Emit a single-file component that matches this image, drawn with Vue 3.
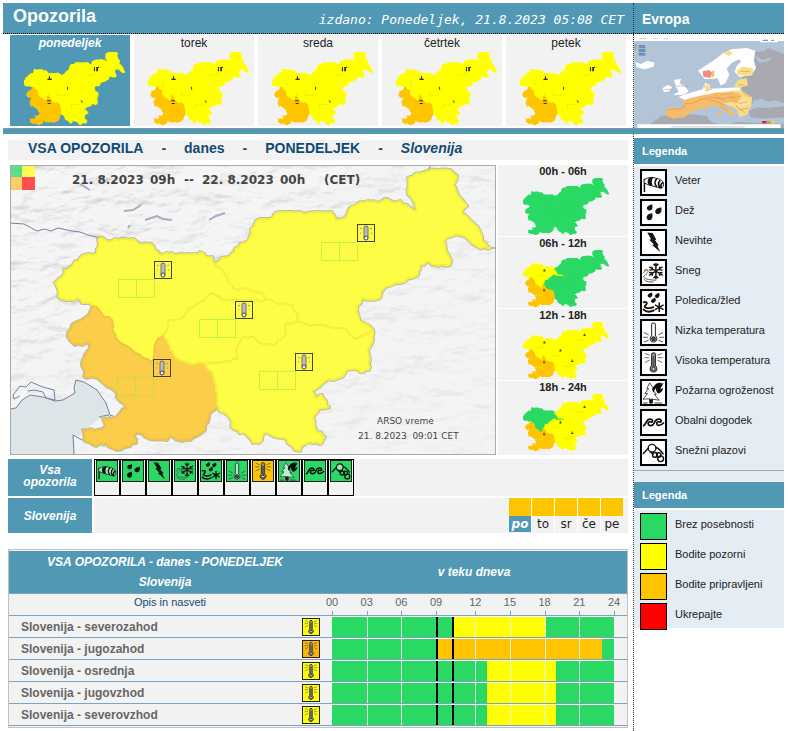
<script setup>
import { ref } from 'vue'

const GREEN = '#29d964'
const YELLOW = '#ffff00'
const ORANGE = '#ffc400'
const RED = '#ff0000'

const outlines = {
  nw: [[100,238],[112,241],[125,239],[132,239],[139,244],[151,244],[158,252],[162,255],[175,255],[188,254],[200,252],[206,257],[212,257],[216,266],[222,270],[228,281],[238,290],[255,291],[265,297],[263,302],[250,300],[222,300],[214,294],[205,300],[190,308],[182,318],[168,322],[166,333],[163,334],[156,342],[153,361],[140,355],[122,344],[112,330],[112,320],[104,317],[93,306],[90,303],[82,303],[78,298],[60,298],[58,289],[55,283],[62,277],[64,270],[73,265],[82,256],[97,253],[98,240]],
  sw: [[93,306],[88,316],[72,325],[68,337],[75,345],[88,342],[90,349],[82,363],[84,376],[100,380],[115,391],[120,401],[127,409],[117,417],[109,419],[103,418],[106,425],[98,430],[83,430],[84,440],[96,446],[106,443],[113,448],[122,449],[130,446],[136,443],[134,435],[140,433],[150,439],[167,440],[170,435],[182,441],[190,440],[205,430],[208,416],[214,410],[217,404],[216,390],[213,375],[206,364],[195,364],[180,360],[170,350],[167,340],[163,334],[156,342],[153,361],[140,355],[122,344],[112,330],[112,320],[104,317]],
  c: [[265,297],[263,302],[250,300],[222,300],[214,294],[205,300],[190,308],[182,318],[168,322],[166,333],[163,334],[167,340],[170,350],[180,360],[195,364],[206,364],[215,362],[225,361],[238,360],[236,350],[242,338],[255,338],[262,344],[275,346],[278,340],[286,335],[285,325],[287,323],[296,322],[298,315],[292,305],[275,302]],
  ne: [[216,266],[222,258],[229,257],[235,249],[248,241],[251,229],[256,221],[270,219],[276,213],[290,212],[305,214],[330,212],[338,220],[347,216],[350,208],[365,202],[378,203],[385,199],[400,201],[415,211],[413,200],[408,194],[408,178],[425,172],[450,170],[457,176],[454,186],[461,199],[467,206],[462,213],[480,232],[483,242],[490,248],[478,247],[460,235],[444,241],[450,258],[450,265],[435,265],[430,262],[420,265],[418,275],[400,283],[383,290],[380,298],[362,298],[357,309],[359,319],[373,330],[355,339],[345,328],[315,325],[298,322],[296,322],[298,315],[292,305],[275,302],[265,297],[255,291],[238,290],[228,281],[222,270]],
  se: [[373,330],[371,345],[369,355],[369,370],[360,372],[353,369],[345,373],[338,378],[327,380],[312,391],[315,397],[322,395],[329,407],[319,409],[313,418],[316,430],[325,437],[320,444],[305,444],[300,451],[295,450],[283,438],[265,432],[262,440],[253,443],[247,435],[240,433],[232,427],[230,418],[222,412],[217,404],[216,390],[213,375],[206,364],[215,362],[225,361],[238,360],[236,350],[242,338],[255,338],[262,344],[275,346],[278,340],[286,335],[285,325],[287,323],[296,322],[298,322],[315,325],[345,328],[355,339]]
}

// Every edge gets repeatable bends that depend only on its end points,
// so that neighbouring regions keep a common border.
function bend(a, b, depth) {
  const [x, y] = a
  const [nx, ny] = b
  if (depth === 0 || Math.hypot(nx - x, ny - y) < 5) return [a]
  const seed = Math.round((x + nx) * 7 + (y + ny) * 13)
  const mid = [(x + nx) / 2 + ((seed % 5) - 2) * 0.6, (y + ny) / 2 + ((seed % 7) - 3) * 0.5]
  return [...bend(a, mid, depth - 1), ...bend(mid, b, depth - 1)]
}
const roughen = points =>
  'M' + points.flatMap((p, i) => bend(p, points[(i + 1) % points.length], 2)).map(p => p.join(' ')).join('L') + 'Z'

const shapes = Object.entries(outlines).map(([id, pts]) => ({ id, d: roughen(pts) }))

const all = (base, extra = {}) => ({ nw: base, sw: base, c: base, ne: base, se: base, ...extra })
const standard = all(YELLOW, { sw: ORANGE })

const boxes = [
  { id: 'nw', x: 154, y: 261 },
  { id: 'ne', x: 357, y: 224 },
  { id: 'c', x: 235, y: 301 },
  { id: 'sw', x: 153, y: 359 },
  { id: 'se', x: 295, y: 353 }
]

const titleParts = [
  { x: 72, text: '21. 8.2023' },
  { x: 150, text: '09h' },
  { x: 184, text: '--' },
  { x: 202, text: '22. 8.2023' },
  { x: 280, text: '00h' },
  { x: 324, text: '(CET)' }
]

const days = [
  { name: 'ponedeljek', short: 'po' },
  { name: 'torek', short: 'to' },
  { name: 'sreda', short: 'sr' },
  { name: 'četrtek', short: 'če' },
  { name: 'petek', short: 'pe' }
]
const activeDay = ref(0)

const periods = [
  { label: '00h - 06h', fills: all(GREEN) },
  { label: '06h - 12h', fills: all(GREEN, { nw: YELLOW, sw: ORANGE }) },
  { label: '12h - 18h', fills: standard },
  { label: '18h - 24h', fills: all(YELLOW, { nw: GREEN, sw: ORANGE }) }
]

const kinds = [
  { id: 'wind', label: 'Veter' },
  { id: 'rain', label: 'Dež' },
  { id: 'storm', label: 'Nevihte' },
  { id: 'snow', label: 'Sneg' },
  { id: 'ice', label: 'Poledica/žled' },
  { id: 'cold', label: 'Nizka temperatura' },
  { id: 'heat', label: 'Visoka temperatura' },
  { id: 'fire', label: 'Požarna ogroženost' },
  { id: 'coast', label: 'Obalni dogodek' },
  { id: 'avalanche', label: 'Snežni plazovi' }
]

const levels = [
  { label: 'Brez posebnosti', color: GREEN },
  { label: 'Bodite pozorni', color: YELLOW },
  { label: 'Bodite pripravljeni', color: ORANGE },
  { label: 'Ukrepajte', color: RED }
]

const rows = [
  { name: 'Slovenija - severozahod', color: YELLOW, from: 10, to: 18 },
  { name: 'Slovenija - jugozahod', color: ORANGE, from: 9, to: 23 },
  { name: 'Slovenija - osrednja', color: YELLOW, from: 13, to: 19 },
  { name: 'Slovenija - jugovzhod', color: YELLOW, from: 13, to: 19 },
  { name: 'Slovenija - severovzhod', color: YELLOW, from: 13, to: 19 }
]
const hours = Array.from({ length: 24 }, (_, h) => h)
const marks = [0, 3, 6, 9, 12, 15, 18, 21, 24]
const two = n => String(n).padStart(2, '0')
const cellColor = (row, h) => (h >= row.from && h < row.to ? row.color : GREEN)
</script>

<template>
  <div class="page">
    <svg class="sprite" aria-hidden="true">
      <symbol id="i-wind" viewBox="0 0 24 24">
        <path d="M2.500 8v14" fill="none" stroke="#111" stroke-width="1.600" />
        <path d="M2.500 9c4-2.500 8-3 12-1.500 4 .5 7 2.500 8 5 .5 3-1 5.500-3 5.500-5-2-11-2-17-5.500" fill="#fff" fill-opacity=".6" stroke="#222" />
        <path d="M7 7.500c2-1 4-1.200 5-.7-2 2-2.500 6-.5 8.700L7 14.500c-1.500-2-1.500-5 0-7Z" fill="#111" />
        <path d="M15.500 8c-2.500 2.500-2.500 6 0 8.500M19 9.500c-2.500 2.500-2 6 0 8M22 12c-2.500 1-3 4-1.500 6" fill="none" stroke="#111" stroke-width="1.800" />
      </symbol>
      <symbol id="i-rain" viewBox="0 0 24 24">
        <path d="M10.500 3.500c1 3 .5 6.500-2.500 6.500S4.500 7 6 5.500s3-1 4.500-2ZM20 6.500c1 3 0 7-3 7s-4-2.500-2.500-4.500 4-1.500 5.500-2.500ZM10.500 12.500c1 3 .5 7.500-2.500 7.500s-4-3-2.500-5 3.500-1.500 5-2.500Z" fill="#161616" />
      </symbol>
      <symbol id="i-storm" viewBox="0 0 24 24">
        <path d="M5.500 1.500 11 2l4 7-1.500.5 4 5.500-1.500.5L19 22l-8.500-7.500 2-.5-5-5 2-.5Z" fill="#161616" />
      </symbol>
      <symbol id="i-snow" viewBox="0 0 24 24">
        <path d="M14.500 2v17M7.500 6l14 9M21.500 6l-14 9M12 3l2.500 2.500L17 3M12 18l2.500-2.500L17 18M7.500 9.500 11 9l-.5-3M18.500 6l-.5 3 3.500.5M7.500 12l3.500.500-.5 3M18.500 15.500l-.5-3 3.500-.5" fill="none" stroke="#151515" stroke-width="1.500" />
        <path d="M2 10c3-2 5-1 4 2-2 3-5 3-4 5s7 3 13 3M2 19c2 3 6 3 10 3M1 13l4-4" fill="none" stroke="#555" />
      </symbol>
      <symbol id="i-ice" viewBox="0 0 24 24">
        <path d="M10 2c1 2 0 4.500-2 4.500S6 4 7 3.500ZM17.500 2.500c1 2 0 4.500-2 4.500s-2-2.500-1-3ZM13.500 7.500c1 2 0 4.500-2 4.500s-2-2.500-1-3Z" fill="#111" stroke="#111" />
        <path d="M18 12v10M13.500 14.500l9 5M22.500 14.500l-9 5" stroke="#111" stroke-width="1.600" />
        <path d="M1 12c3-1.500 5 0 3.500 2s-3 2.500 0 3.500 6 0 8-1M1 19c3 3 8 3 12 1" fill="none" stroke="#111" stroke-width="1.900" />
      </symbol>
      <symbol id="i-cold" viewBox="0 0 24 24">
        <path d="M10 15.500V4a2 2 0 0 1 4 0v11.500a3.500 3.500 0 1 1-4 0Z" fill="#fff" fill-opacity=".6" stroke="#333" stroke-width="1.100" />
        <circle cx="12" cy="18.500" r="2" fill="#555" stroke="#111" />
        <path d="m2 12 5 2.500M1 17h5M2 22l5-2M22 12l-5 2.500M23 17h-5M22 22l-5-2" stroke="#444" stroke-width=".9" />
      </symbol>
      <symbol id="i-heat" viewBox="0 0 24 24">
        <path d="M10 15.500V4a2 2 0 0 1 4 0v11.500a3.500 3.500 0 1 1-4 0Z" fill="#999" stroke="#333" stroke-width="1.200" />
        <path d="M12 5.500V18" stroke="#555" stroke-width="2.200" />
        <circle cx="12" cy="18.700" r="1.700" fill="#ddd" stroke="#222" />
        <path d="m3 2.500 5 2M2.500 7h5M3 12l5-2.500M21 2.500l-5 2M21.500 7h-5M21 12l-5-2.500" stroke="#555" stroke-width=".9" />
      </symbol>
      <symbol id="i-fire" viewBox="0 0 24 24">
        <path d="M8 2 5 8h2l-4 5h3l-5 6 7-.5V23h3v-4l7 1-5-6h2l-4-5h2Z" fill="#fff" fill-opacity=".65" stroke="#444" />
        <path d="M22.500 2c-3 1-5 2-4.500 5 .5-3 1-4 3-5-4-1-7.500 1-8.500 3.500C9.500 8 11 11 13 12.500c-1-3 .5-4 1.500-5 0 3 1 4.500 2.500 5.500 3-.5 5-3 5-6-1 1-2 1.500-3 1.500 1-2 2-4 3.500-6.500Z" fill="#090909" />
        <path d="M8 19h3v4H8zM1 23h5M13 23h8" fill="#111" stroke="#333" />
      </symbol>
      <symbol id="i-coast" viewBox="0 0 24 24">
        <path d="M1 15.500c3.500 0 2.500-7 7.500-7 3 0 3 3 1.500 3-3-1-4.500 1-3 3 2 1.500 4.500.5 5.500-1.500 1-2.500 2.500-4.500 5-4.500 3 0 3 3 1.500 3-3-1-4.500 1-3 3 2 1.500 4.500 0 7-2.500" fill="none" stroke="#0b0b0b" stroke-width="1.800" />
      </symbol>
      <symbol id="i-avalanche" viewBox="0 0 24 24">
        <path d="M1 13.500 7 7M14 6.500c4 1 6 4 8.500 7.500M8 11l4 3" fill="none" stroke="#111" stroke-width="1.500" />
        <circle cx="10.500" cy="7.500" r="4" fill="#fff" fill-opacity=".5" stroke="#111" stroke-width="1.400" />
        <circle cx="13.500" cy="14.500" r="2.500" fill="none" stroke="#111" stroke-width="1.500" />
        <circle cx="17.500" cy="14.500" r="2.300" fill="none" stroke="#111" stroke-width="1.500" />
        <circle cx="19.500" cy="18.500" r="3" fill="none" stroke="#111" stroke-width="1.500" />
      </symbol>
    </svg>

    <header class="top split">
      <div class="main-title">
        <h1>Opozorila</h1>
        <p class="issued">izdano: Ponedeljek, 21.8.2023 05:08 CET</p>
      </div>
      <h2 class="europe-title">Evropa</h2>
    </header>

    <div class="split strip">
      <nav class="days">
        <button
          v-for="(day, i) in days"
          :key="day.name"
          type="button"
          class="day"
          :class="{ active: i === activeDay }"
          @click="activeDay = i"
        >
          <span>{{ day.name }}</span>
          <svg viewBox="55 170 435 282" preserveAspectRatio="none" class="day-map">
            <path v-for="s in shapes" :key="s.id" :d="s.d" :fill="standard[s.id]" :stroke="standard[s.id]" stroke-width="5" />
            <path d="M321 260h36v-14M118 279v18M199 319v18h38M260 390v-18h36M118 377v18" fill="none" stroke="#d8f000" stroke-width="3" />
            <path d="M356 228h5v16h-5zM366 228h12v4h-4v12h-8zM162 264h5v8h7v6h-18v-5h6zM241 304h4v12h-4v-5zM299 356h4v4h4v6h-3zM155 356h16v4h-16zM157 367h13v4h-13z" fill="#33331a" />
          </svg>
        </button>
      </nav>
      <a href="#evropa" class="europe" aria-label="Evropa">
        <svg viewBox="738 108 450 276" preserveAspectRatio="none">
          <path fill="#b3c4d7" d="M738 108h450v276H738z" />
          <path fill="#fff" d="M738 108h450v15H738z" />
          <g fill="#a9a9b1">
            <path d="M1098 156l30-2 12-10 48 18v148l-30-10-12 8-30-2-26 6-30-26 2-50 14-20-6-30zM760 384l30-14 30-22 80-6 56 6 10 16 40 14 40-12 142 6v12zM1082 332l26-10 30 2 50-6v34l-60 4-40-4z" />
            <path d="M738 130l10 4-2 14-8 4z" />
          </g>
          <path fill="#b3c4d7" d="M1096 302l24-6 14 8 40 2 8 12-36 4-40-2-14-6zM1104 166l20 14 26-8-6 12-30 4-8-10z" />
          <g fill="#fff">
            <path d="M930 212l30-20 24-16 20-16 26-12 46-4 26 8-4 30 6 22-14 22-36 4-14-14 6-18 14-14-8-6-22 12-14 16 8 18-12 26-14 6-10-22-14 2-24 2zM742 186l16 6 20-10 22 6-4 12-26 8-24-6zM858 240l22-4-6 14 16 8 12 16-14 10-32 2 16-12-6-10zM824 264l16-10 12 8-8 12-16 2zM872 290l36-12 36-10 8-20 14 8-2 10 92-4 4 26-100 6-56 14z" />
          </g>
          <g fill="#f8dd85">
            <path d="M1046 212l16-12 32 4 2 18-24 6-24-4zM1006 158l16-6 14 6-14 10zM1050 240l26-6 4 22-26 8-16-6zM946 258l12-6 10 12-12 8zM975 278l83-8 34 22-2 26-14 26-22 8-8-24-26-12-24-12z" />
          </g>
          <path fill="#f4bd6c" d="M880 304l26-10 44-10 36-6 68 2 4 14-12 16-20-4-24 6 40 28-10 8-38-28-28-2-26 10-24 4-28 20-32 4-22-10 2-20 34-4 26 2zM948 320l10-4-2 16zM984 338l18-2-8 10z" />
          <path fill="#f7e4a4" d="M1046 306l24-10 14 12-16 14-22-4z" />
          <path d="M890 312l30-4 20-10 30-6 30 4 60-8M838 330l40-4 16-8M960 298l30 8 20 12M1024 288l30 22 24-4M1000 282l40-4M1044 318l26 20M996 318l24 14M1052 330l30-6M980 284l30 18M1064 278l22 14" fill="none" stroke="#ea9648" stroke-width="3" opacity=".7" />
          <path d="M1050 255h20M1056 214h30M866 258h36M830 268h20M952 272l20-4" stroke="#b3a58d" stroke-width="2" />
          <path fill="#f58b8b" d="M944 214l20-4 10 10-8 14-20-4z" />
          <path fill="#f6c35d" d="M972 212l8 2-2 16-8 4z" />
          <path fill="#6d92ba" d="M752 135h20v10h-20zM752 147h20v10h-20zM752 159h20v8h-20z" />
          <path fill="#fff" d="M1116 115h54v12h-54zM748 373h430v11H748z" />
          <path stroke="#8294b5" stroke-width="4" d="M1124 121h16M1150 121h8" />
          <path stroke="#ccd" stroke-width="3" d="M754 116h22M796 116h12M826 116h14" />
          <path stroke="#bbb" stroke-width="3" stroke-dasharray="6 2" d="M850 381h220" />
          <path fill="#d32c2c" d="M1122 363h14v7h-14z" /><path fill="#eadf3f" d="M1150 363h10v7h-10z" /><path fill="#e99034" d="M1138 363h10v7h-10z" />
        </svg>
      </a>
    </div>

    <div class="bar"></div>

    <div class="split body">
      <main class="content">
        <h2 class="crumbs">
          <span>VSA OPOZORILA</span><span>-</span><span>danes</span><span>-</span><span>PONEDELJEK</span><span>-</span><em>Slovenija</em>
        </h2>

        <section class="maps">
          <svg class="big-map" viewBox="10 165 486 290" role="img" aria-label="Slovenija">
            <defs>
              <filter id="relief" x="0" y="0" width="100%" height="100%" color-interpolation-filters="sRGB">
                <feTurbulence type="fractalNoise" baseFrequency=".03 .06" numOctaves="4" seed="8" />
                <feDiffuseLighting surfaceScale="5" diffuseConstant="1.150" lighting-color="#fff">
                  <feDistantLight azimuth="235" elevation="60" />
                </feDiffuseLighting>
              </filter>
              <linearGradient id="fade" x1="0" y1="0" x2="1" y2="1">
                <stop offset="0" stop-color="#fff" />
                <stop offset=".45" stop-color="#888" />
                <stop offset="1" stop-color="#444" />
              </linearGradient>
              <mask id="slope"><path d="M10 165h486v290H10z" fill="url(#fade)" /></mask>
            </defs>
            <path d="M10 165h486v290H10z" fill="#f3f3f3" />
            <g mask="url(#slope)"><path d="M10 165h486v290H10z" filter="url(#relief)" opacity=".25" /></g>
            <path d="M10 409L16 408 22 400 30 395 43 397 55 401 63 400 75 393 76 380 84 382 97 390 106 403 110 415 99 419 82 432 80 437 73 435 75 455H10z" fill="#dde5e9" />
            <g fill="none" stroke="#7182a6">
              <path d="M10 409L16 408 22 400 30 395 43 397 55 401 63 400 75 393 74 388 76 380 84 382 97 390 106 403 110 415 118 418M13 395l7-9 6 1 5-5 7 3 5 2 11 3 1 10-9-2-3-6-9-2-6 1M20 396l-6 3-1-4M82 440l-9-5 1 19M99 417l9-2 4 4" />
              <path d="M10 223l14 1 13 7 8-2 6 2 7-3 14 3 8 1 8 3 12 3M427 171l4-6M486 248l10 0" />
            </g>
            <g fill="none" stroke="#a3aec3" stroke-width="2">
              <path d="M124 211l9-1 8-5M145 220l12-4 6 3 9 1M209 220l7-4 9-3M80 184l10 6M128 228l2-3" />
            </g>
            <g stroke-linejoin="round">
              <path v-for="s in shapes" :key="s.id" :d="s.d" fill="none" stroke="#bbbbaa" stroke-width="4" />
              <path v-for="s in shapes" :key="s.id + 'f'" :d="s.d" :fill="s.id === 'sw' ? '#fccd48' : '#fdfd46'" :stroke="s.id === 'sw' ? '#f0c544' : '#f1f13c'" stroke-width="2" />
            </g>
            <g v-for="b in boxes" :key="b.id">
              <path :d="`M${b.x - 35.5} ${b.y + 18.5}h36v18h-36zM${b.x - 17.5} ${b.y + 18.5}v18`" fill="none" stroke="#a5e34a" opacity=".6" />
              <rect :x="b.x + 0.5" :y="b.y + 0.5" width="17" height="17" fill="none" stroke="#44442a" />
              <path :d="`M${b.x + 3} ${b.y + 4}l2 1m-2 4h1m11-5-2 1m2 4h-1`" stroke="#99996a" fill="none" />
              <path :d="`M${b.x + 9} ${b.y + 4}v9`" stroke="#777" stroke-width="5" stroke-linecap="round" />
              <path :d="`M${b.x + 9} ${b.y + 4}v9`" stroke="#bbb" stroke-width="3" stroke-linecap="round" />
              <circle :cx="b.x + 9" :cy="b.y + 14" r="2" fill="#eee" stroke="#444" />
            </g>
            <g opacity=".8">
              <path fill="#37dc72" d="M10 165h12v12H10z" /><path fill="#ffff2c" d="M22 165h13v12H22z" />
              <path fill="#ffc443" d="M10 177h12v13H10z" /><path fill="#ff2626" d="M22 177h13v13H22z" />
            </g>
            <text y="184" class="map-title">
              <tspan v-for="p in titleParts" :key="p.x" :x="p.x">{{ p.text }}</tspan>
            </text>
            <text x="377" y="424" class="map-note">ARSO vreme</text>
            <text x="358" y="439" class="map-note">{{ '21. 8.2023\u00a0 09:01 CET' }}</text>
            <rect x="10.5" y="165.5" width="485" height="289" fill="none" stroke="#aaa" />
          </svg>
          <div class="periods">
            <figure v-for="p in periods" :key="p.label" class="period">
              <figcaption>{{ p.label }}</figcaption>
              <svg viewBox="55 170 435 282" preserveAspectRatio="none">
                <path v-for="s in shapes" :key="s.id" :d="s.d" :fill="p.fills[s.id]" :stroke="p.fills[s.id]" stroke-width="5" />
                <g v-for="b in boxes" :key="b.id">
                  <template v-if="p.fills[b.id] !== GREEN">
                    <path :d="`M${b.x - 35} ${b.y + 36}h36v-16`" fill="none" stroke="#dcf000" stroke-width="4" />
                    <path :d="`M${b.x + 6} ${b.y + 3}h5v7h4v5H${b.x + 4}v-5h2z`" fill="#44441c" />
                  </template>
                </g>
              </svg>
            </figure>
          </div>
        </section>

        <section class="filters">
          <h3>Vsa opozorila</h3>
          <div class="filter-body">
            <button v-for="k in kinds" :key="k.id" type="button" class="kind" :aria-label="k.label">
              <svg :class="{ warn: k.id === 'heat' }"><use :href="'#i-' + k.id" /></svg>
            </button>
          </div>
          <h3>Slovenija</h3>
          <div class="filter-body right">
            <button
              v-for="(day, i) in days"
              :key="day.short"
              type="button"
              class="mini"
              :class="{ active: i === activeDay }"
              @click="activeDay = i"
            >{{ day.short }}</button>
          </div>
        </section>

        <table class="timeline">
          <colgroup><col class="c-name" /><col class="c-icon" /><col /></colgroup>
          <thead>
            <tr class="titles">
              <th colspan="2">VSA OPOZORILA - danes - PONEDELJEK<br />Slovenija</th>
              <th>v teku dneva</th>
            </tr>
            <tr class="scale">
              <td colspan="2" class="advice"><a href="#opis">Opis in nasveti</a></td>
              <td class="track-cell">
                <div class="hours">
                  <span v-for="m in marks" :key="m" :class="['m' + m, { last: m === 24 }]">{{ two(m) }}</span>
                </div>
              </td>
            </tr>
          </thead>
          <tbody>
            <tr v-for="row in rows" :key="row.name">
              <th scope="row">{{ row.name }}</th>
              <td class="icon-cell">
                <svg :class="{ warn: row.color === ORANGE }"><use href="#i-heat" /></svg>
              </td>
              <td class="track-cell">
                <div class="track">
                  <span
                    v-for="h in hours"
                    :key="h"
                    :class="{ third: h % 3 === 0 && h > 0, now: h === 9 || h === 10 }"
                    :style="{ backgroundColor: cellColor(row, h) }"
                  ></span>
                </div>
              </td>
            </tr>
          </tbody>
        </table>
      </main>

      <aside class="side">
        <h2>Legenda</h2>
        <ul class="legend">
          <li v-for="k in kinds" :key="k.id">
            <svg><use :href="'#i-' + k.id" /></svg><span>{{ k.label }}</span>
          </li>
        </ul>
        <hr />
        <h2>Legenda</h2>
        <ul class="legend levels">
          <li v-for="l in levels" :key="l.label">
            <i :style="{ backgroundColor: l.color }"></i><span>{{ l.label }}</span>
          </li>
        </ul>
      </aside>
    </div>
  </div>
</template>

<style>
body {
  margin: 0;
  background: #fff;
}
</style>

<style scoped>
.page {
  padding: 3px 4px 0 3px;
  font-family: "Liberation Sans", Arial, sans-serif;
  font-size: 12px;
  color: #222;
}
.page * {
  box-sizing: border-box;
}
.sprite {
  position: absolute;
  width: 0;
  height: 0;
}
h1, h2, h3, p, ul, figure {
  margin: 0;
  padding: 0;
}
button {
  font-family: inherit;
  border: 0;
  padding: 0;
  margin: 0;
  color: inherit;
  cursor: pointer;
}
svg {
  display: block;
}
.split {
  display: grid;
  grid-template-columns: minmax(0, 1fr) 151px;
}
.split > :last-child {
  border-left: 1px dotted #333;
}
.top {
  background: #5098b4;
  border-bottom: 1px dotted #000;
  color: #fff;
}
.main-title {
  display: flex;
  justify-content: space-between;
  height: 30px;
  padding: 0 9px 0 10px;
}
h1 {
  font-size: 18px;
  line-height: 26px;
}
.issued {
  font: italic 13px/34px "DejaVu Sans Mono", monospace;
}
.europe-title {
  padding-left: 8px;
  font-size: 14px;
  line-height: 32px;
  height: 30px;
}
.days {
  display: flex;
  gap: 4px;
  padding: 1px 7px 2px;
}
.day {
  flex: 1;
  display: flex;
  flex-direction: column;
  align-items: center;
  padding-bottom: 1px;
  background: #f2f2f2;
  font-size: 12px;
  line-height: 17px;
}
.day.active {
  background: #5098b4;
  color: #fff;
  font-weight: bold;
  font-style: italic;
}
.day-map {
  width: 101px;
  height: 73px;
  margin-left: 9px;
}
.europe {
  display: block;
  padding-top: 2px;
}
.europe svg {
  width: 100%;
  height: 92px;
}
.bar {
  height: 6px;
  background: #5098b4;
  border-top: 1px solid #7b98a5;
}
.content {
  padding: 6px 5px 3px;
}
.crumbs {
  display: flex;
  gap: 18px;
  height: 20px;
  padding-left: 20px;
  background: #f2f2f2;
  color: #124a73;
  font-size: 14px;
  line-height: 17px;
}
.maps {
  display: flex;
  gap: 2px;
  padding: 5px 0 4px 2px;
}
.big-map {
  flex: 1;
  min-width: 0;
}
.map-title {
  font: bold 12px "DejaVu Sans", sans-serif;
  fill: #444;
}
.map-note {
  font: 9px "DejaVu Sans", sans-serif;
  fill: #444;
}
.periods {
  display: flex;
  flex-direction: column;
  gap: 1px;
  width: 130px;
}
.period {
  height: 71px;
  background: #f2f2f2;
  font-size: 11px;
  font-weight: bold;
  line-height: 13px;
  text-align: center;
}
.period:last-child {
  height: auto;
  flex: 1;
}
.period svg {
  width: 86px;
  height: 57px;
  margin-left: 25px;
}
.filters {
  display: grid;
  grid-template-columns: 84px 1fr;
  gap: 2px;
}
.filters h3 {
  display: flex;
  align-items: center;
  justify-content: center;
  padding: 0 14px 4px;
  background: #5098b4;
  color: #fff;
  font-size: 12px;
  font-style: italic;
  line-height: 12px;
  text-align: center;
}
.filters h3:last-of-type {
  padding-bottom: 0;
}
.filter-body {
  display: flex;
  background: #f2f2f2;
}
.filter-body.right {
  justify-content: flex-end;
  gap: 1px;
  padding: 0 5px 0 0;
  height: 35px;
}
.kind {
  width: 26px;
  height: 37px;
  border: 1px solid #000;
  background: #f2f2f2;
  display: flex;
  justify-content: center;
  align-items: flex-start;
}
.kind svg {
  width: 22px;
  height: 22px;
  border: 1px solid #222;
  background: #29d964;
}
.kind svg.warn {
  background: #ffc400;
}
.mini {
  width: 22px;
  height: 34px;
  border-top: 18px solid #ffc400;
  background: #f2f2f2;
  font: 12px/16px "DejaVu Sans", sans-serif;
}
.mini + .mini {
  box-shadow: -1px 0 0 #fff;
}
.mini.active {
  background: #5098b4;
  color: #fff;
  font-weight: bold;
  font-style: italic;
}
.timeline {
  width: 100%;
  margin-top: 16px;
  border: 1px solid #bbc3c8;
  border-collapse: separate;
  border-spacing: 0;
  table-layout: fixed;
  background: #f2f2f2;
  padding: 1px 0;
}
.c-name {
  width: 292px;
}
.c-icon {
  width: 20px;
}
.timeline th,
.timeline td {
  padding: 0;
  border-bottom: 1px solid #7da3bf;
}
.titles th {
  height: 43px;
  background: #5098b4;
  color: #fff;
  font-style: italic;
  line-height: 20px;
}
.scale td {
  height: 22px;
  text-align: center;
  font-size: 11px;
  line-height: 16px;
  vertical-align: top;
}
.timeline .advice {
  padding-left: 10px;
}
.scale a {
  color: #124a73;
  text-decoration: none;
}
.timeline tbody th {
  height: 22px;
  padding-left: 12px;
  text-align: left;
  color: #666;
}
.icon-cell svg {
  width: 18px;
  height: 18px;
  margin-left: 1px;
  border: 1px solid #222;
  background: #ffff00;
}
.icon-cell svg.warn {
  background: #ffb400;
}
.timeline .track-cell {
  padding: 0 13px 0 11px;
}
.track,
.hours {
  display: grid;
  grid-template-columns: repeat(9, 23fr) 32fr repeat(14, 23fr);
}
.track {
  height: 21px;
  border-top: 1px solid #fff;
}
.track .third {
  border-left: 1px solid #e4f2e4;
}
.track .now {
  border-left: 2px solid #000;
}
.hours span {
  grid-row: 1;
  width: 20px;
  height: 21px;
  margin-left: -10px;
  color: #666;
  background: linear-gradient(#7da3bf, #7da3bf) 10px 100% / 1px 4px no-repeat;
}
.m0 { grid-column: 1; }
.m3 { grid-column: 4; }
.m6 { grid-column: 7; }
.m9 { grid-column: 10; }
.m12 { grid-column: 13; }
.m15 { grid-column: 16; }
.m18 { grid-column: 19; }
.m21 { grid-column: 22; }
.m24 { grid-column: 24; }
.hours .last {
  justify-self: end;
  margin: 0 -10px 0 0;
}
.side {
  padding-top: 4px;
}
.side h2 {
  height: 26px;
  padding-left: 8px;
  background: #5098b4;
  color: #fff;
  font-size: 11px;
  line-height: 27px;
}
.legend {
  margin-top: 2px;
  padding: 3px 0 1px 6px;
  background: #e4ecf4;
  list-style: none;
}
.legend li {
  display: flex;
  gap: 8px;
  height: 30px;
  font-size: 11px;
  line-height: 22px;
  white-space: nowrap;
}
.legend svg {
  width: 27px;
  height: 27px;
  border: 2px solid #000;
  background: #fff;
}
.legend i {
  width: 27px;
  height: 27px;
  border: 1px solid #000;
}
.levels {
  height: 118px;
}
hr {
  margin: 0;
  border: 0;
  height: 12px;
  border-top: 1px solid #aaa;
  border-bottom: 2px solid #e4ecf4;
  background: #e4ecf4;
}
</style>
